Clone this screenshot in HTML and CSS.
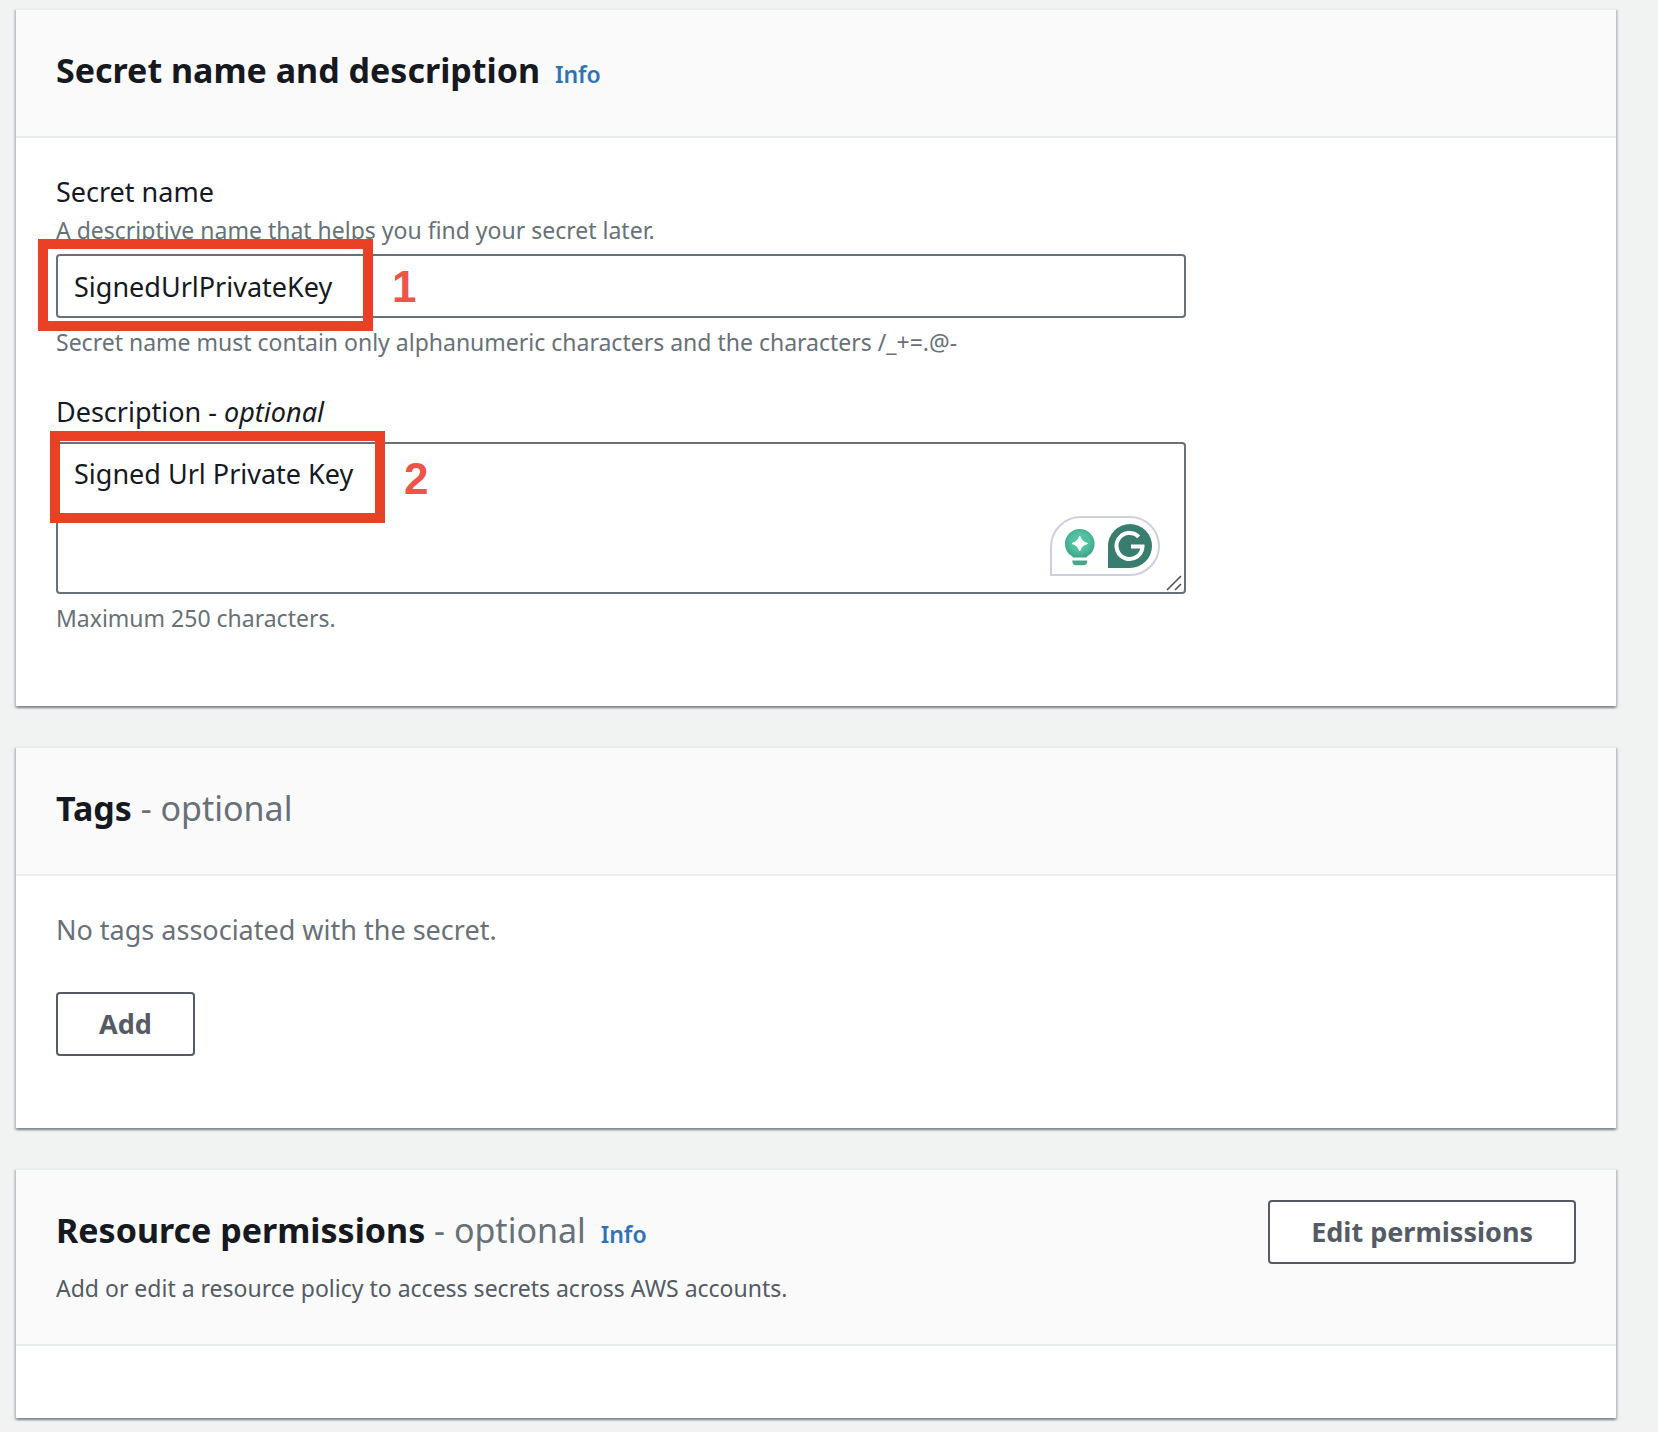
FILE: index.html
```
<!DOCTYPE html>
<html lang="en">
<head>
  <meta charset="utf-8">
  <meta name="viewport" content="width=device-width, initial-scale=1">
  <title>Store a new secret</title>
  <link rel="stylesheet" href="styles.css">
</head>
<body>
  <main class="page">
    <section class="card">
      <header class="card-header">
        <h2 class="card-title">Secret name and description <a class="info" href="#">Info</a></h2>
      </header>
      <div class="card-body">
        <div class="field">
          <label class="label" for="secret-name">Secret name</label>
          <p class="hint" id="name-hint">A descriptive name that helps you find your secret later.</p>
          <div class="control">
            <input class="input" id="secret-name" type="text" value="SignedUrlPrivateKey" aria-describedby="name-hint name-rule">
            <div class="callout callout-name"><span class="callout-number">1</span></div>
          </div>
          <p class="hint" id="name-rule">Secret name must contain only alphanumeric characters and the characters /_+=.@-</p>
        </div>
        <div class="field">
          <label class="label" for="description">Description - <em>optional</em></label>
          <div class="control">
            <textarea class="input textarea" id="description" aria-describedby="description-rule" spellcheck="false">Signed Url Private Key</textarea>
            <svg class="assistant" viewBox="0 0 110 60" aria-hidden="true">
              <defs>
                <radialGradient id="bulb" cx="50%" cy="45%" r="55%">
                  <stop offset="0" stop-color="#5cc9ab"/>
                  <stop offset="0.6" stop-color="#4fbd9f"/>
                  <stop offset="1" stop-color="#3fa58a"/>
                </radialGradient>
              </defs>
              <path d="M1 59V31A30 30 0 0 1 31 1H80A29 29 0 0 1 80 59Z" fill="#fff" stroke="#cfd0df" stroke-width="2"/>
              <path d="M23 41.500C22.500 40 21 39.500 19 38A14.800 14.800 0 1 1 40.500 38C38.500 39.500 37 40 36.500 41.500Z" fill="url(#bulb)"/>
              <path d="M29.700 20Q31.500 25.700 37.500 27.500Q31.500 29.300 29.700 35Q28 29.300 22 27.500Q28 25.700 29.700 20Z" fill="#fff" stroke="#fff" stroke-linejoin="round"/>
              <path d="M22.300 44.500H37.300C37.300 47.800 36 49.300 33.500 49.300H26C23.500 49.300 22.300 47.800 22.300 44.500Z" fill="#45a78d"/>
              <path d="M58 52V30A22 22 0 1 1 80 52Z" fill="#387d6e"/>
              <path d="M88.700 20.800A13 13 0 1 0 92.500 30.500H81" fill="none" stroke="#fff" stroke-width="4"/>
            </svg>
            <svg class="grip" viewBox="0 0 16 16" aria-hidden="true">
              <path d="M1 15L15 1M9 15L15 9" fill="none" stroke="#4a4a4a" stroke-width="1.500"/>
            </svg>
            <div class="callout callout-description"><span class="callout-number">2</span></div>
          </div>
          <p class="hint" id="description-rule">Maximum 250 characters.</p>
        </div>
      </div>
    </section>

    <section class="card">
      <header class="card-header">
        <h2 class="card-title">Tags <span class="optional">- optional</span></h2>
      </header>
      <div class="card-body">
        <p class="empty">No tags associated with the secret.</p>
        <button class="button" type="button">Add</button>
      </div>
    </section>

    <section class="card">
      <header class="card-header">
        <div>
          <h2 class="card-title">Resource permissions <span class="optional">- optional</span> <a class="info" href="#">Info</a></h2>
          <p class="card-subtitle">Add or edit a resource policy to access secrets across AWS accounts.</p>
        </div>
        <button class="button" type="button">Edit permissions</button>
      </header>
      <div class="card-body card-body-empty"></div>
    </section>
  </main>
</body>
</html>
```
FILE: styles.css
```
* {
  box-sizing: border-box;
}

body {
  margin: 0;
  background: #f1f3f3;
  color: #16191f;
  font-family: "Noto Sans", "Open Sans", sans-serif;
  font-size: 27px;
  line-height: 44px;
}

h2,
p {
  margin: 0;
}

.page {
  display: flex;
  flex-direction: column;
  gap: 40px;
  padding: 8px 42px 14px 16px;
}

.card {
  border-top: 2px solid #eaeded;
  background: #fff;
  box-shadow:
    0 2px 2px 0 rgba(0, 28, 36, 0.3),
    2px 2px 2px 0 rgba(0, 28, 36, 0.15),
    -2px 2px 2px 0 rgba(0, 28, 36, 0.15);
}

.card-header {
  display: flex;
  justify-content: space-between;
  align-items: flex-start;
  padding: 30px 40px 36px;
  border-bottom: 2px solid #eaeded;
  background: #fafafa;
}

.card-title {
  font-size: 34px;
  font-weight: 700;
  line-height: 60px;
}

.optional {
  color: #687078;
  font-weight: 400;
}

.info {
  margin-left: 6px;
  color: #2e73b8;
  font-size: 23px;
  font-weight: 600;
  line-height: 32px;
  text-decoration: none;
}

.card-subtitle {
  margin-top: 8px;
  color: #545b64;
  font-size: 23px;
  line-height: 40px;
}

.card-body {
  display: flex;
  flex-direction: column;
  align-items: flex-start;
  gap: 32px;
  padding: 32px 40px 72px;
}

.card-body-empty {
  padding: 0 40px 72px;
}

.field {
  display: flex;
  flex-direction: column;
  width: 100%;
  max-width: 1130px;
}

.label {
  display: block;
}

.hint {
  color: #687078;
  font-size: 23px;
  line-height: 32px;
}

.control {
  position: relative;
  margin: 8px 0;
}

.input {
  display: block;
  width: 100%;
  height: 64px;
  padding: 8px 16px;
  border: 2px solid #687078;
  border-radius: 4px;
  background: #fff;
  color: #16191f;
  font: inherit;
}

.textarea {
  height: 152px;
  resize: none;
}

.assistant {
  position: absolute;
  right: 26px;
  bottom: 18px;
  width: 110px;
  height: 60px;
}

.grip {
  position: absolute;
  right: 4px;
  bottom: 3px;
  width: 16px;
  height: 16px;
}

.callout {
  position: absolute;
  width: 335px;
  height: 92px;
  border: 10px solid #ea4025;
  pointer-events: none;
}

.callout-name {
  top: -15px;
  left: -18px;
}

.callout-description {
  top: -11px;
  left: -6px;
}

.callout-number {
  position: absolute;
  top: 0;
  left: 344px;
  color: #ec5547;
  font-family: "Liberation Sans", Arial, sans-serif;
  font-size: 44px;
  font-weight: 700;
  line-height: 76px;
}

.empty {
  margin-bottom: 8px;
  color: #687078;
}

.button {
  height: 64px;
  padding: 0 41px;
  border: 2px solid #545b64;
  border-radius: 4px;
  background: #fff;
  color: #545b64;
  font: inherit;
  font-weight: 700;
}
```
